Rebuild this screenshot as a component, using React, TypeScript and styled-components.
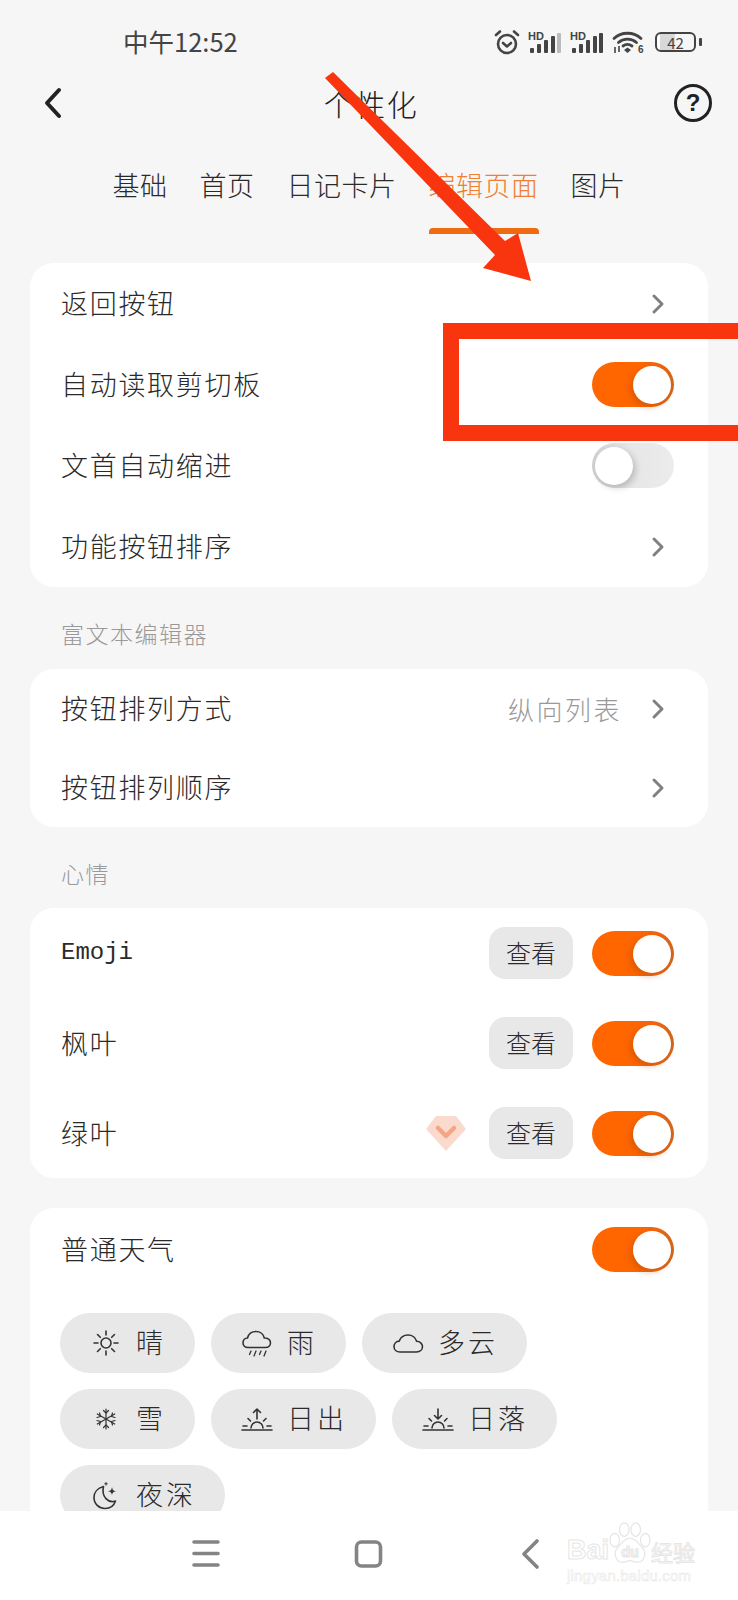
import * as React from 'react'
import styled, { createGlobalStyle } from 'styled-components'

const GlobalStyle = createGlobalStyle`
  html, body {
    margin: 0;
    padding: 0;
    background: #f6f6f6;
    font-family: "Noto Sans CJK SC", "Noto Sans", sans-serif;
  }
`

const Screen = styled.div`
  position: relative;
  width: 738px;
  height: 1600px;
  display: flex;
  flex-direction: column;
  overflow: hidden;
  background: #f6f6f6;
  color: #2a2a2a;
`

const Scroll = styled.div`
  flex: 1;
  min-height: 0;
  overflow: hidden;
`

const StatusBar = styled.div`
  height: 84px;
  display: flex;
  align-items: center;
  justify-content: space-between;
  padding: 0 36px 0 123px;
`

const StatusTime = styled.span`
  margin-bottom: 4px;
  font-size: 25.5px;
  color: #444;
`

const StatusIcons = styled.div`
  display: flex;
  align-items: center;
  gap: 8px;
`

const Battery = styled.div`
  display: flex;
  align-items: center;
  gap: 3px;
  margin-left: 2px;
`

const BatteryBody = styled.div`
  width: 41px;
  height: 20px;
  box-sizing: border-box;
  border: 2px solid #444;
  border-radius: 6px;
  display: flex;
  align-items: center;
  justify-content: center;
  font-size: 15px;
  line-height: 1;
  color: #444;
  background: linear-gradient(90deg, #fff 8%, #d8d8d8 8%, #d8d8d8 50%, transparent 50%);
`

const BatteryNub = styled.div`
  width: 3px;
  height: 8px;
  border-radius: 1px;
  background: #444;
`

const Header = styled.div`
  height: 38px;
  display: grid;
  grid-template-columns: 1fr auto 1fr;
  align-items: center;
  padding: 0 26px;
`

const BackArrow = styled.svg`
  margin-left: 18px;
`

const Title = styled.h1`
  margin: 0 0 0 4px;
  font-size: 30px;
  line-height: 38px;
  font-weight: 300;
  letter-spacing: 1.5px;
  color: #222;
`

const HelpButton = styled.div`
  justify-self: end;
  width: 38px;
  height: 38px;
  box-sizing: border-box;
  border: 3px solid #222;
  border-radius: 50%;
  display: flex;
  align-items: center;
  justify-content: center;
  font-family: "Liberation Sans", sans-serif;
  font-size: 24px;
  font-weight: 700;
  color: #222;
`

const Tabs = styled.div`
  display: flex;
  justify-content: center;
  gap: 32px;
  padding-top: 44px;
  margin-bottom: 29px;
`

const Tab = styled.div<{ $active?: boolean }>`
  font-size: 27px;
  line-height: 37px;
  letter-spacing: 0.5px;
  font-weight: 300;
  color: ${props => (props.$active ? '#ee7f33' : '#2a2a2a')};

  &::after {
    content: '';
    display: block;
    height: 6px;
    margin-top: 25px;
    border-radius: 4px 4px 0 0;
    background: ${props => (props.$active ? '#f06a12' : 'transparent')};
  }
`

const Card = styled.div`
  margin: 0 30px;
  background: #fff;
  border-radius: 24px;
  overflow: hidden;
`

const NextCard = styled(Card)`
  margin-top: 30px;
`

const Row = styled.div<{ $height: number }>`
  height: ${props => props.$height}px;
  display: flex;
  align-items: center;
  padding: 0 34px 0 31px;
`

const RowLabel = styled.span`
  flex: 1;
  margin-bottom: 2px;
  font-size: 27px;
  font-weight: 300;
  letter-spacing: 1.7px;
  color: #2a2a2a;
`

const LatinLabel = styled(RowLabel)`
  font-family: "Liberation Mono", monospace;
  font-size: 24px;
  font-weight: 400;
  letter-spacing: 0;
`

const RowValue = styled.span`
  margin-right: 29px;
  font-size: 26px;
  font-weight: 300;
  letter-spacing: 2.5px;
  color: #999;
`

const ChevronBox = styled.svg`
  width: 14px;
  height: 22px;
  margin-right: 9px;
`

const Toggle = styled.div<{ $on?: boolean }>`
  width: 82px;
  height: 45px;
  box-sizing: border-box;
  padding: 3px;
  border-radius: 23px;
  display: flex;
  justify-content: ${props => (props.$on ? 'flex-end' : 'flex-start')};
  background: ${props =>
    props.$on
      ? 'linear-gradient(90deg, #ff6600 55%, #f06510 80%, #d0671f 100%)'
      : 'linear-gradient(90deg, #cfcfcf 0%, #e6e6e6 45%, #ececec 100%)'};
`

const Knob = styled.div<{ $on?: boolean }>`
  width: 38px;
  height: 38px;
  margin-top: 1px;
  border-radius: 50%;
  background: #fff;
  box-shadow: ${props => (props.$on ? '-3px 3px 6px rgba(160, 70, 0, 0.35)' : '3px 3px 6px rgba(0, 0, 0, 0.18)')};
`

const SectionLabel = styled.div<{ $height: number }>`
  height: ${props => props.$height}px;
  box-sizing: border-box;
  padding: 10px 0 0 61px;
  display: flex;
  align-items: center;
  font-size: 23px;
  font-weight: 300;
  letter-spacing: 1.5px;
  color: #999;
`

const ViewButton = styled.div`
  width: 84px;
  height: 52px;
  margin-right: 19px;
  border-radius: 16px;
  background: #e8e8e8;
  display: flex;
  align-items: center;
  justify-content: center;
  padding-bottom: 3px;
  box-sizing: border-box;
  font-size: 25px;
  font-weight: 300;
  color: #2a2a2a;
`

const Gem = styled.svg`
  width: 42px;
  height: 37px;
  margin-right: 22px;
`

const Chips = styled.div`
  display: flex;
  flex-wrap: wrap;
  gap: 16px;
  margin-top: 23px;
  padding: 0 34px 40px 30px;
`

const Chip = styled.div`
  height: 60px;
  box-sizing: border-box;
  padding: 0 29px 0 30px;
  border-radius: 30px;
  background: #e8e8e8;
  display: flex;
  align-items: center;
  gap: 14px;
  font-size: 27px;
  font-weight: 300;
  letter-spacing: 3px;
  color: #2a2a2a;
`

const ChipText = styled.span`
  margin-bottom: 3px;
`

const ChipIcon = styled.svg`
  width: 32px;
  height: 32px;
  flex: none;
  fill: none;
  stroke: #333;
  stroke-width: 1.6;
  stroke-linecap: round;
  stroke-linejoin: round;
`

const BottomNav = styled.div`
  height: 89px;
  flex: none;
  box-sizing: border-box;
  padding: 28px 191px 0 190px;
  background: #fff;
  display: flex;
  justify-content: space-between;
  align-items: flex-start;
`

const NavIcon = styled.svg`
  width: 32px;
  height: 32px;
  fill: none;
  stroke: #848484;
  stroke-width: 3.6;
  stroke-linecap: round;
  stroke-linejoin: round;
`

// annotations someone drew on top of the screenshot
const MarkerFrame = styled.div`
  position: absolute;
  left: 443px;
  top: 323px;
  width: 320px;
  height: 118px;
  box-sizing: border-box;
  border: 16px solid #f8350f;
`

const MarkerArrow = styled.svg`
  position: absolute;
  left: 0;
  top: 0;
  width: 738px;
  height: 300px;
`

const Watermark = styled.div`
  position: absolute;
  left: 567px;
  top: 1520px;
  width: 134px;
  display: flex;
  flex-direction: column;
  font-family: "Liberation Sans", sans-serif;
  color: #fff;
  -webkit-text-stroke: 1px #e6e6e6;
`

const WatermarkTop = styled.div`
  display: flex;
  align-items: flex-end;
  height: 46px;
  font-size: 27px;
  font-weight: 700;
  line-height: 32px;
  white-space: nowrap;
`

const WatermarkCn = styled.span`
  flex: none;
  font-family: "Noto Sans CJK SC", sans-serif;
  font-size: 22px;
  font-weight: 400;
  line-height: 30px;
`

const WatermarkUrl = styled.div`
  font-size: 15px;
  line-height: 20px;
  letter-spacing: 0.2px;
  white-space: nowrap;
  -webkit-text-stroke: 0.5px #e6e6e6;
`

const PawIcon = styled.svg`
  flex: none;
  width: 42px;
  height: 46px;
`

const Chevron = () => (
  <ChevronBox viewBox="0 0 14 22" fill="none" stroke="#808080" strokeWidth="3" strokeLinecap="round" strokeLinejoin="round">
    <path d="M3 3l8 8-8 8" />
  </ChevronBox>
)

const Signal = ({ weak }: { weak?: boolean }) => (
  <svg width="34" height="24" viewBox="0 0 34 24">
    <text x="0" y="10" fontFamily="Liberation Sans" fontSize="11" fontWeight="700" fill="#444">HD</text>
    <rect x="2" y="18" width="4" height="5" rx="1" fill="#444" />
    <rect x="9" y="14" width="4" height="9" rx="1" fill="#444" />
    <rect x="16" y="10" width="4" height="13" rx="1" fill="#444" />
    <rect x="23" y="6" width="4" height="17" rx="1" fill="#444" />
    <rect x="29" y="3" width="4" height="20" rx="1" fill={weak ? '#bbb' : '#444'} />
  </svg>
)

const Alarm = () => (
  <svg width="26" height="26" viewBox="0 0 26 26" fill="none" stroke="#444" strokeWidth="2.6" strokeLinecap="round" strokeLinejoin="round">
    <circle cx="13" cy="15" r="9" />
    <path d="M9 14l4 3.5 4-3.5" />
    <path d="M2 6l4-3.5M24 6l-4-3.5" />
  </svg>
)

const Wifi = () => (
  <svg width="33" height="24" viewBox="0 0 33 24">
    <g fill="none" stroke="#444" strokeWidth="2.8" strokeLinecap="round">
      <path d="M2 8.500C9 1.500 22 1.500 29 8.500" />
      <path d="M6.500 12.500c5-4.500 13-4.500 18 0" />
      <path d="M11 16c2.800-2 6-2 9 0" />
    </g>
    <path d="M15.500 17.500l3.500 2.500-3.500 3-3.500-3z" fill="#444" />
    <path d="M3 17v6M7 16v6" stroke="#444" strokeWidth="1.6" />
    <text x="26" y="23" fontFamily="Liberation Sans" fontSize="10" fontWeight="700" fill="#444">6</text>
  </svg>
)

const SunIcon = () => (
  <ChipIcon viewBox="0 0 32 32">
    <circle cx="16" cy="16" r="5" />
    <path d="M16 4v4M16 24v4M4 16h4M24 16h4M7.500 7.500l2.800 2.800M21.700 21.700l2.800 2.800M24.500 7.500l-2.800 2.800M10.300 21.700l-2.800 2.800" />
  </ChipIcon>
)

const RainIcon = () => (
  <ChipIcon viewBox="0 0 32 32">
    <path d="M7 20.500c-3 0-5-2-5-4.800 0-2.600 2-4.600 4.500-4.700C7.500 7 11 4.500 15 4.500c4.200 0 7.500 2.800 8.300 6.500 3.300-.2 6.200 1.800 6.200 4.800 0 2.700-2 4.700-5 4.700z" />
    <path d="M10 24l-1.500 3.500M15 24l-2 5M20 24l-1.500 3.500M25 24l-2 5" strokeWidth="1.300" />
  </ChipIcon>
)

const CloudIcon = () => (
  <ChipIcon viewBox="0 0 32 32">
    <path d="M8 25c-3.500 0-6-2.300-6-5.500 0-3 2.300-5.300 5.300-5.400C8.500 10.500 12 8 16 8c4.300 0 7.700 2.800 8.600 6.300 3.200 0 5.900 2.300 5.900 5.300 0 3.100-2.600 5.400-6 5.400z" />
  </ChipIcon>
)

const SnowIcon = () => (
  <ChipIcon viewBox="0 0 32 32">
    <g strokeWidth="1.200">
      <path d="M16 6v20M7.300 11l17.400 10M24.700 11L7.300 21" />
      <path d="M13.500 7.500L16 10l2.500-2.500M13.500 24.500L16 22l2.500 2.500M7 14.500l3.500-1-1-3.500M25 14.500l-3.500-1 1-3.500M7 17.500l3.500 1-1 3.500M25 17.500l-3.500 1 1 3.500" />
    </g>
  </ChipIcon>
)

const HorizonIcon = ({ down }: { down?: boolean }) => (
  <ChipIcon viewBox="0 0 32 32">
    <path d="M1 27h30" />
    <path d="M10 25a6 6 0 0 1 12 0" />
    <path d="M2 23h4M26 23h4M7 15.500l2.500 2.500M25 15.500L22.500 18" />
    {down ? <path d="M16 6v10M12.500 12.500L16 16l3.500-3.500" /> : <path d="M16 6v10M12.500 9.500L16 6l3.500 3.500" />}
  </ChipIcon>
)

const MoonIcon = () => (
  <ChipIcon viewBox="0 0 32 32">
    <path d="M13.500 7.500C7.500 9 4 13.500 4 18.500 4 25 9 29.500 15 29.500c5 0 9-3 10.500-7.500-7 2.500-14.500-4-12-14.500z" />
    <path d="M22 8c.5 3 1.200 3.700 4 4.200-2.800.5-3.500 1.200-4 4-.5-2.800-1.200-3.500-4-4 2.800-.5 3.500-1.200 4-4.200z" fill="#333" stroke="none" />
    <path d="M16 3.500v2.500M14.800 4.800h2.400" strokeWidth="1.100" />
  </ChipIcon>
)

const Paw = () => (
  <PawIcon viewBox="0 0 44 46" fill="#fff" stroke="#e6e6e6" strokeWidth="1.300">
    <ellipse cx="16" cy="9" rx="5" ry="7" />
    <ellipse cx="28" cy="9" rx="5" ry="7" />
    <ellipse cx="6" cy="20" rx="5" ry="7" />
    <ellipse cx="38" cy="20" rx="5" ry="7" />
    <path d="M22 18c-6 0-9 6-13 10-5 5-2 16 6 15 4 0 5-1.500 7-1.500s3 1.500 7 1.500c8 1 11-10 6-15-4-4-7-10-13-10z" />
    <text x="22" y="38" textAnchor="middle" fontFamily="Liberation Sans" fontSize="15" fontWeight="700" fill="#fff">du</text>
  </PawIcon>
)

const moods = [
  { name: '枫叶' },
  { name: '绿叶', paid: true }
]

const weather = [
  { name: '晴', icon: <SunIcon /> },
  { name: '雨', icon: <RainIcon /> },
  { name: '多云', icon: <CloudIcon /> },
  { name: '雪', icon: <SnowIcon /> },
  { name: '日出', icon: <HorizonIcon /> },
  { name: '日落', icon: <HorizonIcon down /> },
  { name: '夜深', icon: <MoonIcon /> }
]

export default function App() {
  return (
    <Screen>
      <GlobalStyle />
      <Scroll>
        <StatusBar>
          <StatusTime>中午12:52</StatusTime>
          <StatusIcons>
            <Alarm />
            <Signal weak />
            <Signal />
            <Wifi />
            <Battery>
              <BatteryBody>42</BatteryBody>
              <BatteryNub />
            </Battery>
          </StatusIcons>
        </StatusBar>

        <Header>
          <BackArrow width="18" height="32" viewBox="0 0 18 32" fill="none" stroke="#222" strokeWidth="4" strokeLinecap="round" strokeLinejoin="round">
            <path d="M15 3L3 16l12 13" />
          </BackArrow>
          <Title>个性化</Title>
          <HelpButton>?</HelpButton>
        </Header>

        <Tabs>
          <Tab>基础</Tab>
          <Tab>首页</Tab>
          <Tab>日记卡片</Tab>
          <Tab $active>编辑页面</Tab>
          <Tab>图片</Tab>
        </Tabs>

        <Card>
          <Row $height={81}>
            <RowLabel>返回按钮</RowLabel>
            <Chevron />
          </Row>
          <Row $height={81}>
            <RowLabel>自动读取剪切板</RowLabel>
            <Toggle $on><Knob $on /></Toggle>
          </Row>
          <Row $height={81}>
            <RowLabel>文首自动缩进</RowLabel>
            <Toggle><Knob /></Toggle>
          </Row>
          <Row $height={81}>
            <RowLabel>功能按钮排序</RowLabel>
            <Chevron />
          </Row>
        </Card>

        <SectionLabel $height={82}>富文本编辑器</SectionLabel>
        <Card>
          <Row $height={79}>
            <RowLabel>按钮排列方式</RowLabel>
            <RowValue>纵向列表</RowValue>
            <Chevron />
          </Row>
          <Row $height={79}>
            <RowLabel>按钮排列顺序</RowLabel>
            <Chevron />
          </Row>
        </Card>

        <SectionLabel $height={81}>心情</SectionLabel>
        <Card>
          <Row $height={90}>
            <LatinLabel>Emoji</LatinLabel>
            <ViewButton>查看</ViewButton>
            <Toggle $on><Knob $on /></Toggle>
          </Row>
          {moods.map(mood => (
            <Row $height={90} key={mood.name}>
              <RowLabel>{mood.name}</RowLabel>
              {mood.paid && (
                <Gem viewBox="0 0 42 37">
                  <path d="M11 1h20l10 13-20 22L1 14z" fill="#fbdace" />
                  <path d="M13 13l8 8 8-8" fill="none" stroke="#f4a583" strokeWidth="4.500" strokeLinecap="round" strokeLinejoin="round" />
                </Gem>
              )}
              <ViewButton>查看</ViewButton>
              <Toggle $on><Knob $on /></Toggle>
            </Row>
          ))}
        </Card>

        <NextCard>
          <Row $height={82}>
            <RowLabel>普通天气</RowLabel>
            <Toggle $on><Knob $on /></Toggle>
          </Row>
          <Chips>
            {weather.map(item => (
              <Chip key={item.name}>
                {item.icon}
                <ChipText>{item.name}</ChipText>
              </Chip>
            ))}
          </Chips>
        </NextCard>
      </Scroll>

      <BottomNav>
        <NavIcon viewBox="0 0 32 32">
          <path d="M4 3h24M4 14.500h24M4 26h24" />
        </NavIcon>
        <NavIcon viewBox="0 0 32 32">
          <rect x="3.500" y="3" width="24" height="24" rx="5" />
        </NavIcon>
        <NavIcon viewBox="0 0 32 32">
          <path d="M22 2L9 15l13 13" />
        </NavIcon>
      </BottomNav>

      <MarkerFrame />
      <MarkerArrow viewBox="0 0 738 300">
        <polygon points="325,78 333,72 505,241 518,233 531,281 483,268 495,255" fill="#f8350f" />
      </MarkerArrow>

      <Watermark>
        <WatermarkTop>
          Bai
          <Paw />
          <WatermarkCn>经验</WatermarkCn>
        </WatermarkTop>
        <WatermarkUrl>jingyan.baidu.com</WatermarkUrl>
      </Watermark>
    </Screen>
  )
}
